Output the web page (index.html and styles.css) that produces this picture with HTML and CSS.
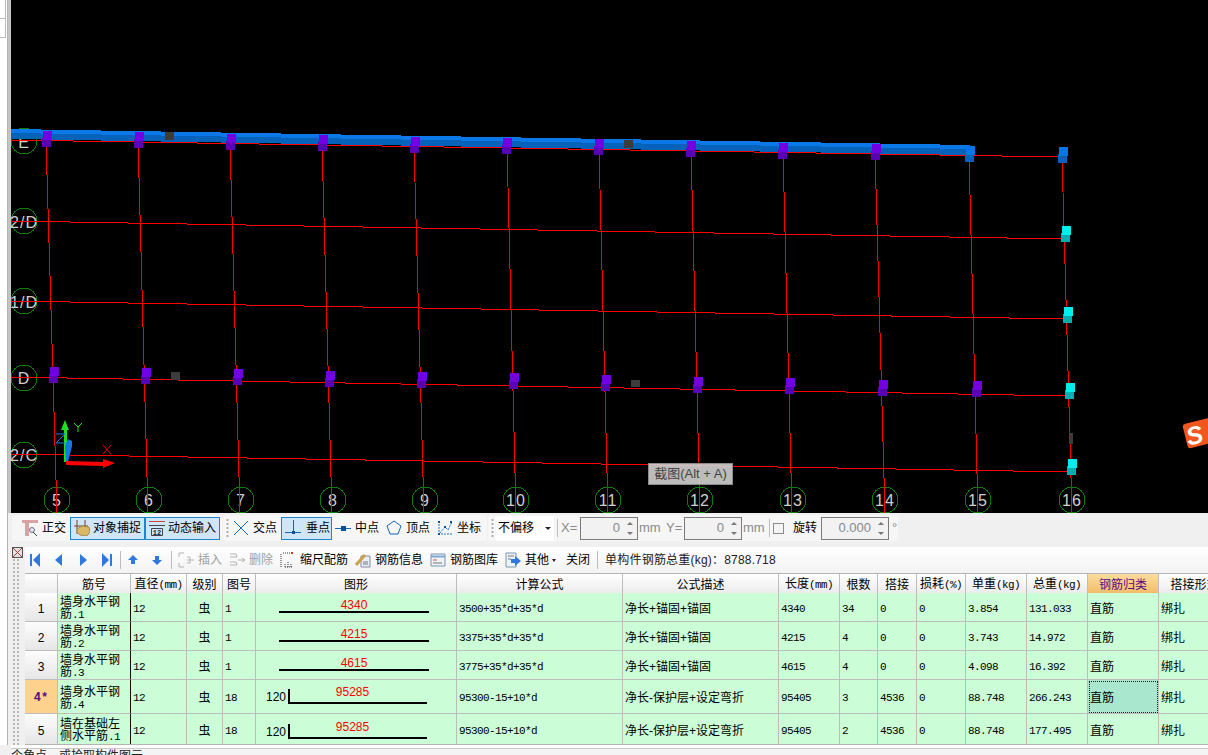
FILE: index.html
```html
<!DOCTYPE html>
<html lang="zh">
<head>
<meta charset="utf-8">
<title>钢筋编辑</title>
<link rel="stylesheet" href="styles.css">
</head>
<body>
<div class="app">
  <div class="rail"><div class="rail-strip"><div class="rail-tab"></div><div class="rail-tab"></div></div></div>
  <div class="main">
    <div class="viewport">
      <svg class="scene" width="1197" height="513" viewBox="11 0 1197 513">
        <defs>
          <g id="pp"><rect class="pp-d" x="-5" y="-1" width="9" height="9"/><rect class="pp-l" x="-4" y="-8" width="9" height="9"/></g>
          <g id="pb"><rect class="pb-d" x="-5" y="-1" width="9" height="9"/><rect class="pb-l" x="-4" y="-8" width="9" height="9"/></g>
          <g id="pc"><rect class="pc-d" x="-5" y="-1" width="9" height="9"/><rect class="pc-l" x="-4" y="-8" width="9" height="9"/></g>
        </defs>
        <g class="bubbles">
          <circle cx="24" cy="141" r="13"/><circle cx="24" cy="221" r="13"/><circle cx="24" cy="301" r="13"/><circle cx="24" cy="378" r="13"/><circle cx="24" cy="455" r="13"/>
          <circle cx="57" cy="500" r="13"/><circle cx="149" cy="500" r="13"/><circle cx="241" cy="500" r="13"/><circle cx="333" cy="500" r="13"/><circle cx="425" cy="500" r="13"/><circle cx="516" cy="500" r="13"/><circle cx="608" cy="500" r="13"/><circle cx="700" cy="500" r="13"/><circle cx="793" cy="500" r="13"/><circle cx="885" cy="500" r="13"/><circle cx="978" cy="500" r="13"/><circle cx="1072" cy="500" r="13"/>
        </g>
        <g class="labels">
          <text x="24" y="148">E</text><text x="24" y="228">2/D</text><text x="24" y="308">1/D</text><text x="24" y="384">D</text><text x="24" y="461">2/C</text>
          <text x="57" y="506">5</text><text x="149" y="506">6</text><text x="241" y="506">7</text><text x="333" y="506">8</text><text x="425" y="506">9</text><text x="516" y="506">10</text><text x="608" y="506">11</text><text x="700" y="506">12</text><text x="793" y="506">13</text><text x="885" y="506">14</text><text x="978" y="506">15</text><text x="1072" y="506">16</text>
        </g>
        <g class="grid">
          <line x1="11" y1="140" x2="1063" y2="157"/><line x1="11" y1="221" x2="1065" y2="239"/><line x1="11" y1="301" x2="1067" y2="319"/><line x1="11" y1="377" x2="1069" y2="396"/><line x1="11" y1="454" x2="1072" y2="472"/>
          <line x1="46" y1="140" x2="57" y2="513"/><line x1="138" y1="140" x2="148" y2="513"/><line x1="230" y1="142" x2="240" y2="513"/><line x1="322" y1="143" x2="332" y2="513"/><line x1="414" y1="145" x2="424" y2="513"/><line x1="507" y1="146" x2="516" y2="513"/><line x1="599" y1="148" x2="608" y2="513"/><line x1="691" y1="149" x2="700" y2="513"/><line x1="783" y1="151" x2="792" y2="513"/><line x1="875" y1="152" x2="885" y2="513"/><line x1="969" y1="154" x2="978" y2="513"/><line x1="1062" y1="156" x2="1072" y2="513"/>
        </g>
        <polygon class="beam-d" points="11,132 970,148 970,155 11,139"/>
        <polygon class="beam-l" points="11,129 970,145 970,149 11,133"/>
        <rect class="stub" x="165" y="132" width="9" height="8"/><rect class="stub" x="624" y="140" width="9" height="8"/><rect class="stub" x="171" y="372" width="9" height="8"/><rect class="stub" x="631" y="380" width="9" height="7"/><rect class="stub" x="1069" y="433" width="4" height="11"/>
        <use href="#pp" x="47" y="139"/><use href="#pp" x="139" y="140"/><use href="#pp" x="231" y="142"/><use href="#pp" x="323" y="143"/><use href="#pp" x="415" y="145"/><use href="#pp" x="507" y="146"/><use href="#pp" x="599" y="147"/><use href="#pp" x="691" y="149"/><use href="#pp" x="783" y="151"/><use href="#pp" x="876" y="152"/>
        <use href="#pb" x="970" y="154"/><use href="#pb" x="1063" y="155"/>
        <use href="#pp" x="54" y="375"/><use href="#pp" x="146" y="376"/><use href="#pp" x="238" y="377"/><use href="#pp" x="330" y="379"/><use href="#pp" x="422" y="380"/><use href="#pp" x="514" y="381"/><use href="#pp" x="606" y="383"/><use href="#pp" x="698" y="385"/><use href="#pp" x="790" y="386"/><use href="#pp" x="883" y="388"/><use href="#pp" x="977" y="389"/>
        <use href="#pc" x="1066" y="234"/><use href="#pc" x="1068" y="315"/><use href="#pc" x="1070" y="391"/><use href="#pc" x="1072" y="467"/>
        <g class="axes">
          <rect class="ax-g" x="64" y="430" width="3" height="32"/><polygon class="ax-g" points="65,420 61,430 69,430"/>
          <polyline class="ax-gl" points="74,423 78,427 82,423"/><line class="ax-gl" x1="78" y1="427" x2="78" y2="432"/>
          <polyline class="ax-bl" points="56,434 65,434 56,443 65,443"/>
          <polygon class="ax-b" points="66,462 65,446 68,439 72,441 72,446 68,462"/>
          <polygon class="ax-r" points="66,461 103,462 103,459 115,463 103,468 103,466 66,465"/>
          <line class="ax-rl" x1="103" y1="445" x2="111" y2="454"/><line class="ax-rl" x1="111" y1="445" x2="103" y2="454"/>
        </g>
        <g class="sogou" transform="rotate(-14 1198 434)">
          <rect class="sogou-bg" x="1185" y="421" width="28" height="25" rx="3"/>
          <text class="sogou-s" x="1186" y="443">S</text>
        </g>
      </svg>
      <div class="shot-tip">截图(Alt + A)</div>
    </div>

    <div class="toolbar">
      <div class="band band-a">
        <div class="tool tool-first">
          <svg class="ico" viewBox="0 0 16 16"><path class="i-pink" d="M0 0h16v3H7v13H3V3H0z"/><circle class="i-lens" cx="10" cy="10" r="2.500"/><path class="i-line" d="M11 12l4 4"/></svg>
          <span>正交</span>
        </div>
        <div class="tool btn">
          <svg class="ico" viewBox="0 0 16 16"><path class="i-brown" d="M3 0v14M11 0v14M0 6h14"/><path class="i-hand" d="M3 9l5-3 7 1 1 5-3 4-7-1-3-3z"/></svg>
          <span>对象捕捉</span>
        </div>
        <div class="tool btn">
          <svg class="ico" viewBox="0 0 16 16"><path class="i-red" d="M0 1.500h16"/><path class="i-line" d="M0 5.500h16M2.500 8.500h11v7h-11z"/><text class="i-num" x="8" y="14.500">12</text></svg>
          <span>动态输入</span>
        </div>
      </div>
      <div class="band band-b">
        <div class="grip"></div>
        <div class="tool ml-4">
          <svg class="ico" viewBox="0 0 16 16"><path class="i-blue" d="M1 1l14 14M15 1L1 15"/></svg>
          <span>交点</span>
        </div>
        <div class="tool btn btn-snap ml-4">
          <svg class="ico" viewBox="0 0 16 16"><path class="i-blue" d="M8.500 0v12M0 12.500h16"/><rect class="i-dot" x="7" y="11" width="3" height="3"/></svg>
          <span>垂点</span>
        </div>
        <div class="tool ml-3">
          <svg class="ico" viewBox="0 0 16 16"><path class="i-blue" d="M0 8.500h16"/><rect class="i-dot" x="6" y="6" width="5" height="5"/></svg>
          <span>中点</span>
        </div>
        <div class="tool ml-7">
          <svg class="ico" viewBox="0 0 16 16"><path class="i-blue" d="M8 1l7 5-3 8H4L1 6z"/></svg>
          <span>顶点</span>
        </div>
        <div class="tool ml-7">
          <svg class="ico" viewBox="0 0 16 16"><path class="i-dash" d="M2 1v13h13M3 13L8 7l3 3 4-8"/><rect class="i-dot" x="1" y="1" width="2" height="2"/><rect class="i-dot" x="13" y="1" width="2" height="2"/><rect class="i-dot" x="1" y="13" width="2" height="2"/><rect class="i-dot" x="7" y="6" width="2" height="2"/></svg>
          <span>坐标</span>
        </div>
      </div>
      <div class="band band-c">
        <div class="grip"></div>
        <div class="combo"><span>不偏移</span><i class="caret"></i></div>
        <div class="vsep ml-3"></div>
        <span class="muted field-x">X=</span>
        <div class="num num-xy ml-2">0<span class="spin"><i class="up"></i><i class="down"></i></span></div>
        <span class="muted unit">mm</span>
        <span class="muted field-y">Y=</span>
        <div class="num num-xy ml-2">0<span class="spin"><i class="up"></i><i class="down"></i></span></div>
        <span class="muted unit">mm</span>
        <div class="vsep ml-3"></div>
        <div class="check"></div>
        <span class="rot-label">旋转</span>
        <div class="num num-rot">0.000<span class="spin"><i class="up"></i><i class="down"></i></span></div>
        <span class="muted deg">°</span>
      </div>
    </div>

    <div class="panel">
      <div class="gutter">
        <svg class="close" viewBox="0 0 11 11" width="11" height="11"><rect class="close-box" x="0.500" y="0.500" width="10" height="10"/><path class="close-x" d="M1 1l9 9M10 1L1 10"/></svg>
        <div class="dots"></div>
      </div>
      <div class="sheet">
        <div class="bar">
          <svg class="nav nav-first" viewBox="0 0 10 14"><rect class="nav-f" x="0" y="1" width="2" height="12"/><path class="nav-f" d="M10 0v14L3 7z"/></svg>
          <svg class="nav nav-gap" viewBox="0 0 10 14"><path class="nav-f" d="M8 1v12L1 7z"/></svg>
          <svg class="nav nav-gap" viewBox="0 0 10 14"><path class="nav-f" d="M2 1v12l7-6z"/></svg>
          <svg class="nav nav-gap" viewBox="0 0 10 14"><path class="nav-f" d="M0 0v14l7-7z"/><rect class="nav-f" x="8" y="1" width="2" height="12"/></svg>
          <div class="vsep sep-a"></div>
          <svg class="nav nav-up" viewBox="0 0 10 10"><path class="nav-f" d="M5 0l5 5H7v4H3V5H0z"/></svg>
          <svg class="nav nav-down" viewBox="0 0 10 10"><path class="nav-f" d="M3 1h4v4h3L5 10 0 5h3z"/></svg>
          <div class="vsep sep-b"></div>
          <div class="tool act-a dim">
            <svg class="ico ico-b" viewBox="0 0 17 16"><path class="i-dim" d="M1 1h5M1 1v4M1 11v4h5M9 8h7M9 5h3v6H9"/></svg>
            <span>插入</span>
          </div>
          <div class="tool act-b dim">
            <svg class="ico ico-b" viewBox="0 0 17 16"><path class="i-dim" d="M1 2h6l1 3H1M1 10h6l1 3H1M9 8h7M13 6l3 2-3 2"/></svg>
            <span>删除</span>
          </div>
          <div class="tool act-c">
            <svg class="ico ico-s" viewBox="0 0 14 16"><path class="i-ink" d="M1 2v13M3 1h8M5 15h8M5 12v3M8 10v5M11 12v3"/><rect class="i-red-f" x="11" y="0" width="2" height="2"/></svg>
            <span>缩尺配筋</span>
          </div>
          <div class="tool act-d">
            <svg class="ico" viewBox="0 0 16 16"><path class="i-doc" d="M6 4h9v11H6z"/><path class="i-pencil" d="M1 13L10 3"/><path class="i-ink2" d="M8 10h5M8 12h5"/></svg>
            <span>钢筋信息</span>
          </div>
          <div class="tool act-d">
            <svg class="ico" viewBox="0 0 16 16"><path class="i-doc2" d="M1 2h14v12H1z"/><path class="i-band" d="M1 4.500h14"/><path class="i-red-thin" d="M3 8h4"/><path class="i-ink2" d="M3 11h9"/></svg>
            <span>钢筋图库</span>
          </div>
          <div class="tool act-d">
            <svg class="ico" viewBox="0 0 16 16"><path class="i-doc2" d="M1 1h10v14H1z"/><path class="i-ink2" d="M3 4h6M3 7h3"/><path class="nav-f" d="M6 7h4V4l6 5-6 5v-3H6z"/></svg>
            <span>其他</span>
            <i class="caret caret-small"></i>
          </div>
          <span class="act-close">关闭</span>
          <div class="vsep sep-c"></div>
          <span class="total">单构件钢筋总重(kg)：8788.718</span>
        </div>
        <div class="sheet-clip">
          <table class="rebar">
            <colgroup>
              <col class="c-rh"><col class="c-name"><col class="c-dia"><col class="c-grade"><col class="c-fig"><col class="c-shape"><col class="c-calc"><col class="c-desc"><col class="c-len"><col class="c-cnt"><col class="c-lap"><col class="c-loss"><col class="c-w"><col class="c-w"><col class="c-kind"><col class="c-form">
            </colgroup>
            <thead>
              <tr>
                <th class="rh"></th><th>筋号</th><th>直径<span class="mono">(mm)</span></th><th>级别</th><th>图号</th><th>图形</th><th>计算公式</th><th>公式描述</th><th>长度<span class="mono">(mm)</span></th><th>根数</th><th>搭接</th><th>损耗<span class="mono">(%)</span></th><th>单重<span class="mono">(kg)</span></th><th>总重<span class="mono">(kg)</span></th><th class="th-sel">钢筋归类</th><th>搭接形式</th>
              </tr>
            </thead>
            <tbody>
              <tr class="row">
                <td class="rh">1</td><td class="name">墙身水平钢筋<span class="mono">.1</span></td><td class="mono">12</td><td class="center">虫</td><td class="mono">1</td>
                <td class="draw"><div class="shape"><span class="dim-no">4340</span></div></td>
                <td class="mono">3500+35*d+35*d</td><td>净长+锚固+锚固</td><td class="mono">4340</td><td class="mono">34</td><td class="mono">0</td><td class="mono">0</td><td class="mono">3.854</td><td class="mono">131.033</td><td>直筋</td><td>绑扎</td>
              </tr>
              <tr class="row">
                <td class="rh">2</td><td class="name">墙身水平钢筋<span class="mono">.2</span></td><td class="mono">12</td><td class="center">虫</td><td class="mono">1</td>
                <td class="draw"><div class="shape"><span class="dim-no">4215</span></div></td>
                <td class="mono">3375+35*d+35*d</td><td>净长+锚固+锚固</td><td class="mono">4215</td><td class="mono">4</td><td class="mono">0</td><td class="mono">0</td><td class="mono">3.743</td><td class="mono">14.972</td><td>直筋</td><td>绑扎</td>
              </tr>
              <tr class="row">
                <td class="rh">3</td><td class="name">墙身水平钢筋<span class="mono">.3</span></td><td class="mono">12</td><td class="center">虫</td><td class="mono">1</td>
                <td class="draw"><div class="shape"><span class="dim-no">4615</span></div></td>
                <td class="mono">3775+35*d+35*d</td><td>净长+锚固+锚固</td><td class="mono">4615</td><td class="mono">4</td><td class="mono">0</td><td class="mono">0</td><td class="mono">4.098</td><td class="mono">16.392</td><td>直筋</td><td>绑扎</td>
              </tr>
              <tr class="row row-tall">
                <td class="rh rh-cur">4*</td><td class="name">墙身水平钢筋<span class="mono">.4</span></td><td class="mono">12</td><td class="center">虫</td><td class="mono">18</td>
                <td class="draw"><div class="bent-wrap"><span class="hook">120</span><div class="bent"><span class="dim-no">95285</span></div></div></td>
                <td class="mono">95300-15+10*d</td><td>净长-保护层+设定弯折</td><td class="mono">95405</td><td class="mono">3</td><td class="mono">4536</td><td class="mono">0</td><td class="mono">88.748</td><td class="mono">266.243</td><td class="cur">直筋</td><td>绑扎</td>
              </tr>
              <tr class="row row-last">
                <td class="rh">5</td><td class="name">墙在基础左侧水平筋<span class="mono">.1</span></td><td class="mono">12</td><td class="center">虫</td><td class="mono">18</td>
                <td class="draw"><div class="bent-wrap"><span class="hook">120</span><div class="bent"><span class="dim-no">95285</span></div></div></td>
                <td class="mono">95300-15+10*d</td><td>净长-保护层+设定弯折</td><td class="mono">95405</td><td class="mono">2</td><td class="mono">4536</td><td class="mono">0</td><td class="mono">88.748</td><td class="mono">177.495</td><td>直筋</td><td>绑扎</td>
              </tr>
            </tbody>
          </table>
        </div>
      </div>
    </div>
    <div class="status">个角点，或拾取构件图元</div>
  </div>
</div>
</body>
</html>
```
FILE: styles.css
```css
* { box-sizing: border-box; }
html, body { margin: 0; padding: 0; }
body {
  width: 1208px; height: 755px; overflow: hidden; background: #fff;
  font: 12px/14px "Liberation Sans", "Noto Sans CJK SC", sans-serif; color: #000;
}
.app { display: flex; width: 1208px; height: 755px; }
.rail { width: 11px; flex: none; background: linear-gradient(#c4c4c4 513px, #f0f0f0 513px); }
.rail-strip { width: 8px; height: 745px; background: #fff; border-right: 1px solid #b4b4b4; }
.rail-tab { width: 6px; height: 19px; border-right: 1px solid #bbb; border-bottom: 1px solid #bbb; }
.main { width: 1197px; flex: none; overflow: hidden; }

/* drawing viewport */
.viewport { position: relative; height: 513px; background: #000; }
.scene { display: block; }
.scene .grid line { stroke: #f00; stroke-width: 1; shape-rendering: crispEdges; }
.bubbles circle { fill: none; stroke: #0a800a; stroke-width: 1; shape-rendering: crispEdges; }
.labels text { fill: #cfcfcf; font: 16px "Liberation Sans", sans-serif; text-anchor: middle; letter-spacing: 1px; }
.beam-d { fill: #0462ba; shape-rendering: crispEdges; }
.beam-l { fill: #0a78e6; shape-rendering: crispEdges; }
.stub { fill: #3c3c3c; }
.pp-d { fill: #5a00b4; } .pp-l { fill: #7200e2; }
.pb-d { fill: #0362bb; } .pb-l { fill: #0076ea; }
.pc-d { fill: #00b0b0; } .pc-l { fill: #00eeee; }
.ax-g { fill: #1fe01f; }
.ax-gl { fill: none; stroke: #1fe01f; }
.ax-bl { fill: none; stroke: #1478e0; }
.ax-b { fill: #1478e0; }
.ax-r { fill: #f00; }
.ax-rl { stroke: #e00; }
.sogou-bg { fill: #f0561e; }
.sogou-s { fill: #fff; font: italic bold 25px "Liberation Sans", sans-serif; }
.shot-tip {
  position: absolute; left: 637px; top: 463px; width: 85px; height: 22px;
  background: rgba(214, 214, 214, .88); border: 1px solid #8c8c8c; color: #444;
  font-size: 13px; line-height: 20px; text-align: center; white-space: nowrap;
}

/* snap toolbar */
.toolbar { display: flex; height: 34px; padding: 2px 0 6px 1px; gap: 1px; background: #f0f0f0; }
.band { display: flex; align-items: center; height: 26px; background: #f6f6f6; border-radius: 3px; }
.band-a { width: 210px; padding-left: 10px; }
.band-b { width: 264px; padding-left: 3px; }
.band-c { width: 410px; padding-left: 3px; }
.tool { display: flex; align-items: center; gap: 4px; white-space: nowrap; flex: none; }
.tool-first { margin-right: 4px; }
.btn { height: 23px; padding: 0 3px; gap: 3px; background: #cfe6f8; border: 1px solid #1c85d0; }
.btn-snap { width: 51px; gap: 5px; }
.ico { width: 16px; height: 16px; flex: none; display: block; }
.ico-b { width: 17px; }
.ico-s { width: 14px; }
.ml-2 { margin-left: 2px; } .ml-3 { margin-left: 3px; } .ml-4 { margin-left: 4px; } .ml-7 { margin-left: 7px; }
.grip {
  width: 3px; height: 20px; flex: none;
  background: radial-gradient(circle, #a8a8a8 1px, transparent 1.2px) 0 0 / 3px 4px;
}
.i-pink { fill: #d9a3a3; }
.i-lens { fill: #dfe6ee; stroke: #778; }
.i-line { fill: none; stroke: #444; }
.i-brown { fill: none; stroke: #8a3a2a; }
.i-hand { fill: #d9b86a; stroke: #a98a45; }
.i-red { fill: none; stroke: #c44; }
.i-num { font: bold 7px "Liberation Mono", monospace; text-anchor: middle; fill: #222; }
.i-blue { fill: none; stroke: #1068b8; }
.i-dot { fill: #0b4f96; }
.i-dash { fill: none; stroke: #1c78c8; stroke-dasharray: 2 1; }
.i-dim { fill: none; stroke: #b4b4b4; }
.i-ink { fill: none; stroke: #333; stroke-dasharray: 1 1; }
.i-ink2 { fill: none; stroke: #777; }
.i-red-f { fill: #c33; }
.i-red-thin { fill: none; stroke: #c55; }
.i-doc { fill: #e8eef5; stroke: #88a; }
.i-doc2 { fill: #eef3f8; stroke: #7a94b0; }
.i-band { fill: none; stroke: #7fa8d0; stroke-width: 2; }
.i-pencil { fill: none; stroke: #c9a24a; stroke-width: 3; }
.combo { display: flex; align-items: center; width: 58px; height: 25px; margin-left: 2px; padding-left: 2px; background: #fff; flex: none; }
.combo span { width: 47px; }
.caret { width: 0; height: 0; border: 3px solid transparent; border-top: 3px solid #222; border-bottom: 0; display: block; flex: none; }
.caret-small { margin-left: -1px; border-width: 3px 2.500px 0; }
.vsep { width: 1px; height: 18px; background: #bcbcbc; flex: none; }
.muted { color: #8a8a8a; white-space: nowrap; flex: none; font-size: 13px; }
.field-x { margin-left: 3px; width: 17px; }
.field-y { margin-left: 4px; width: 16px; }
.unit { margin-left: 1px; width: 23px; }
.num {
  display: flex; align-items: center; justify-content: flex-end; height: 23px; flex: none;
  background: #f2f2f2; border: 1px solid #7c7c7c; color: #7f8b98; font-size: 13px;
}
.num-xy { width: 58px; }
.num-rot { width: 68px; margin-left: 4px; }
.spin { display: flex; flex-direction: column; justify-content: center; gap: 7px; width: 13px; margin-left: 4px; height: 100%; padding-left: 3px; }
.spin i { display: block; width: 0; height: 0; border-left: 3px solid transparent; border-right: 3px solid transparent; }
.spin .up { border-bottom: 3px solid #777; }
.spin .down { border-top: 3px solid #777; }
.check { width: 11px; height: 11px; margin-left: 3px; border: 1px solid #8c8c8c; background: #f4f4f4; flex: none; }
.rot-label { margin-left: 9px; width: 24px; flex: none; }
.deg { margin-left: 3px; }

/* panel */
.panel { display: flex; height: 198px; background: #f0f0f0; }
.gutter { width: 14px; flex: none; padding-left: 1px; }
.close { display: block; }
.close-box { fill: #e8dede; stroke: #555; }
.close-x { fill: none; stroke: #944; }
.dots {
  width: 8px; height: 187px;
  background: radial-gradient(circle, #b8b8b8 1px, transparent 1.2px) 0 0 / 4px 4px;
}
.sheet { width: 1183px; flex: none; }
.bar {
  display: flex; align-items: center; height: 26px; padding-left: 5px;
  background: linear-gradient(#fff, #f2f2f2); white-space: nowrap;
}
.nav { display: block; width: 10px; height: 14px; flex: none; }
.nav-f { fill: #2f78dc; }
.nav-gap { margin-left: 14px; }
.nav-up { margin-left: 7px; height: 10px; }
.nav-down { margin-left: 14px; height: 10px; }
.sep-a { margin-left: 8px; }
.sep-b { margin-left: 9px; }
.sep-c { margin-left: 7px; }
.dim { color: #a0a0a0; gap: 3px; }
.act-a { margin-left: 6px; }
.act-b { margin-left: 7px; gap: 3px; }
.act-c { margin-left: 7px; gap: 6px; }
.act-d { margin-left: 7px; }
.act-close { margin-left: 10px; }
.total { margin-left: 7px; color: #222; font-size: 12px; letter-spacing: .2px; }

.sheet-clip { height: 172px; overflow: hidden; border-top: 1px solid #b4b4b4; border-bottom: 1px solid #b4b4b4; }
.rebar { table-layout: fixed; width: 1206px; border-collapse: separate; border-spacing: 0; background: #cbfdd6; line-height: 13px; }
.c-rh { width: 33px; } .c-name { width: 73px; } .c-dia { width: 56px; } .c-grade { width: 36px; } .c-fig { width: 33px; }
.c-shape { width: 201px; } .c-calc { width: 166px; } .c-desc { width: 156px; } .c-len { width: 61px; } .c-cnt { width: 38px; }
.c-lap { width: 39px; } .c-loss { width: 49px; } .c-w { width: 61px; } .c-kind { width: 71px; } .c-form { width: 72px; }
.rebar th {
  height: 19px; padding: 3px 0 0; font-weight: normal; text-align: center; white-space: nowrap; overflow: hidden;
  background: linear-gradient(#fff, #ececec); border-right: 1px solid #bdbdbd;
}
.rebar th.th-sel { background: linear-gradient(#fadd9f, #f2bd68); color: #5a0a86; }
.rebar td { padding: 4px 0 0 2px; border-right: 1px solid #bdbdbd; border-bottom: 1px solid #bdbdbd; overflow: hidden; white-space: nowrap; }
.row td { height: 29px; }
.row-tall td { height: 34px; }
.row-last td { height: 30px; border-bottom: 0; }
.rebar td.rh { padding: 4px 0 0; text-align: center; background: linear-gradient(#fdfdfd, #e6e6e6); }
.rebar td.rh-cur { background: #fdd28c; color: #5a0a86; font-family: "Liberation Mono", monospace; font-weight: bold; }
.rebar td.name { padding-top: 3px; line-height: 12px; white-space: normal; word-break: break-all; border-right: 1px solid #111; }
.rebar td.center { padding: 4px 0 0; text-align: center; }
.rebar td.draw { padding-top: 0; }
.rebar td.mono, .mono { font-family: "Liberation Mono", monospace; font-size: 11px; letter-spacing: -.6px; }
.rebar td.cur { background: #a9e8cf; outline: 1px dotted #222; outline-offset: -2px; }
.shape { width: 150px; height: 16px; margin: 0 0 5px 21px; padding-top: 2px; border-bottom: 2px solid #000; text-align: center; }
.dim-no { display: block; color: #f00; font-size: 12px; line-height: 13px; }
.bent-wrap { display: flex; align-items: flex-end; gap: 5px; padding-left: 8px; }
.row-last .bent-wrap { margin-top: 5px; }
.hook { font-size: 12px; line-height: 14px; width: 17px; flex: none; }
.bent { width: 139px; height: 15px; border-left: 2px solid #000; border-bottom: 2px solid #000; text-align: center; padding-right: 12px; }
.bent .dim-no { line-height: 6px; }

.status { height: 10px; margin-top: 3px; border-top: 1px solid #c8c8c8; background: #f4f4f4; line-height: 14px; white-space: nowrap; overflow: hidden; color: #222; }
```
